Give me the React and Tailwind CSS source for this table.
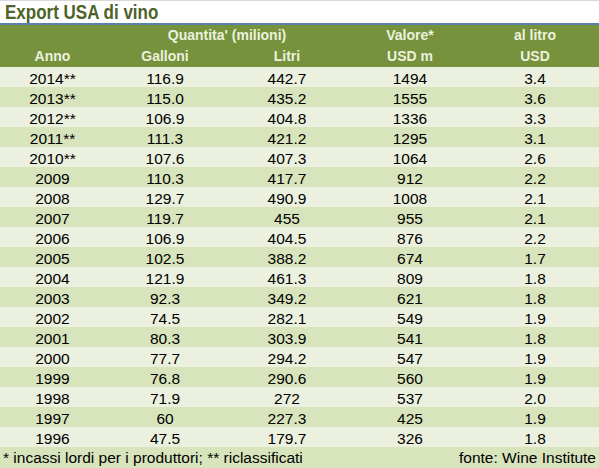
import React from 'react';

const rows = [
  ['2014**', '116.9', '442.7', '1494', '3.4'],
  ['2013**', '115.0', '435.2', '1555', '3.6'],
  ['2012**', '106.9', '404.8', '1336', '3.3'],
  ['2011**', '111.3', '421.2', '1295', '3.1'],
  ['2010**', '107.6', '407.3', '1064', '2.6'],
  ['2009', '110.3', '417.7', '912', '2.2'],
  ['2008', '129.7', '490.9', '1008', '2.1'],
  ['2007', '119.7', '455', '955', '2.1'],
  ['2006', '106.9', '404.5', '876', '2.2'],
  ['2005', '102.5', '388.2', '674', '1.7'],
  ['2004', '121.9', '461.3', '809', '1.8'],
  ['2003', '92.3', '349.2', '621', '1.8'],
  ['2002', '74.5', '282.1', '549', '1.9'],
  ['2001', '80.3', '303.9', '541', '1.8'],
  ['2000', '77.7', '294.2', '547', '1.9'],
  ['1999', '76.8', '290.6', '560', '1.9'],
  ['1998', '71.9', '272', '537', '2.0'],
  ['1997', '60', '227.3', '425', '1.9'],
  ['1996', '47.5', '179.7', '326', '1.8'],
];

const cols = 'grid grid-cols-[105px_120px_124px_122px_1fr]';

export default function App() {
  return (
    <div className="w-[599px] h-[468px] bg-white font-['Liberation_Sans',Arial,sans-serif] text-black overflow-hidden">
      {/* title */}
      <div className="h-[23px] border-t border-[#d9d9d9] bg-white flex items-end pl-[5px]">
        <h1 className="font-bold text-[20px] leading-[22px] text-[#4f6228] scale-x-[0.85] origin-left whitespace-nowrap">
          Export USA di vino
        </h1>
      </div>
      <div className="h-[2px] bg-[#5b80ab]" />

      {/* header */}
      <div className="bg-[#76923c] text-[#ebf1de] font-bold text-[14px]">
        <div className={`${cols} h-[21px] items-center text-center`}>
          <div />
          <div className="col-span-2">Quantita' (milioni)</div>
          <div>Valore*</div>
          <div>al litro</div>
        </div>
        <div className={`${cols} h-[21px] items-center text-center`}>
          <div>Anno</div>
          <div>Galloni</div>
          <div>Litri</div>
          <div>USD m</div>
          <div>USD</div>
        </div>
      </div>

      {/* data */}
      <div className="text-[15.5px]">
        {rows.map((r, i) => (
          <div
            key={r[0]}
            className={`${cols} h-[20px] items-center text-center ${i % 2 === 0 ? 'bg-[#ebf1de]' : 'bg-[#d8e4bc]'}`}
          >
            {r.map((c, j) => (
              <div key={j}>{c}</div>
            ))}
          </div>
        ))}
      </div>

      {/* footer */}
      <div className="h-[21px] bg-[#d8e4bc] flex items-center justify-between px-[3px] text-[15.5px]">
        <span>* incassi lordi per i produttori; ** riclassificati</span>
        <span>fonte: Wine Institute</span>
      </div>
    </div>
  );
}
